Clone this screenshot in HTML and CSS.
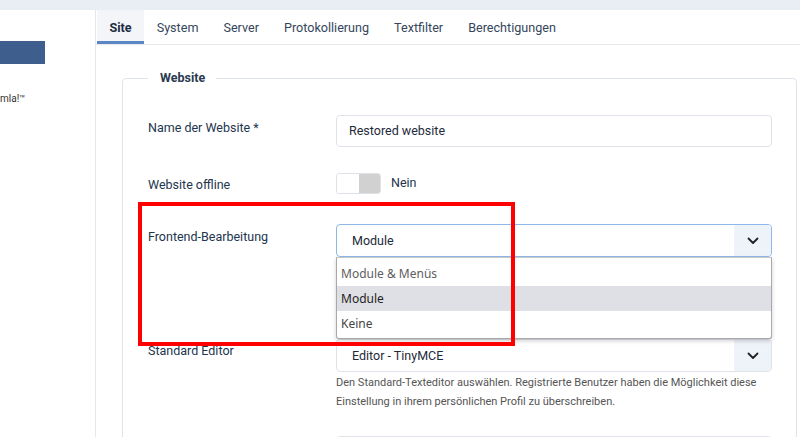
FILE: index.html
```html
<!DOCTYPE html>
<html lang="de">
<head>
<meta charset="utf-8">
<title>Globale Konfiguration</title>
<link rel="stylesheet" href="styles.css">
</head>
<body>
<div class="topstrip"></div>
<div class="layout">
  <aside class="sidebar">
    <div class="side-bar-blue"></div>
    <div class="side-text">mla!™</div>
  </aside>
  <main class="main">
    <nav class="tabs">
      <span class="tab active">Site</span>
      <span class="tab">System</span>
      <span class="tab">Server</span>
      <span class="tab">Protokollierung</span>
      <span class="tab">Textfilter</span>
      <span class="tab">Berechtigungen</span>
    </nav>
    <div class="content">
      <fieldset class="box">
        <legend>Website</legend>
        <div class="row row-name">
          <label class="lbl">Name der Website *</label>
          <div class="ctl"><div class="input">Restored website</div></div>
        </div>
        <div class="row row-offline">
          <label class="lbl">Website offline</label>
          <div class="ctl toggle-wrap">
            <span class="toggle"><span class="t-on"></span><span class="t-off"></span></span>
            <span class="toggle-text">Nein</span>
          </div>
        </div>
        <div class="row row-frontend">
          <label class="lbl">Frontend-Bearbeitung</label>
          <div class="ctl dd-anchor">
            <div class="select focus">
              <span class="sel-text">Module</span>
              <span class="sel-arrow"><svg width="12" height="8" viewBox="0 0 12 8"><path d="M1.5 1.5 L6 6 L10.5 1.5" fill="none" stroke="#222" stroke-width="1.8" stroke-linecap="round" stroke-linejoin="round"/></svg></span>
            </div>
            <ul class="dropdown">
              <li class="opt opt-first">Module &amp; Menüs</li>
              <li class="opt opt-sel">Module</li>
              <li class="opt">Keine</li>
            </ul>
          </div>
        </div>
        <div class="row row-editor">
          <label class="lbl">Standard Editor</label>
          <div class="ctl">
            <div class="select">
              <span class="sel-text">Editor - TinyMCE</span>
              <span class="sel-arrow"><svg width="12" height="8" viewBox="0 0 12 8"><path d="M1.5 1.5 L6 6 L10.5 1.5" fill="none" stroke="#222" stroke-width="1.8" stroke-linecap="round" stroke-linejoin="round"/></svg></span>
            </div>
            <p class="desc">Den Standard-Texteditor auswählen. Registrierte Benutzer haben die Möglichkeit diese Einstellung in ihrem persönlichen Profil zu überschreiben.</p>
          </div>
        </div>
        <div class="row row-next">
          <label class="lbl"></label>
          <div class="ctl"><div class="select"><span class="sel-text"></span><span class="sel-arrow"></span></div></div>
        </div>
      </fieldset>
      <div class="highlight"></div>
    </div>
  </main>
</div>
</body>
</html>
```

FILE: styles.css
```css
html, body {
  margin: 0;
  padding: 0;
  background: #fff;
  font-family: Roboto, "Liberation Sans", sans-serif;
  overflow: hidden;
  height: 437px;
}
.topstrip {
  height: 10px;
  background: #e9edf4;
}
.layout {
  display: flex;
  height: 427px;
}
.sidebar {
  width: 96px;
  flex: none;
  border-right: 1px solid #e4e8ee;
  padding-top: 31px;
  box-sizing: border-box;
}
.side-bar-blue {
  width: 45px;
  height: 23px;
  background: #3e5f8e;
}
.side-text {
  margin-top: 29px;
  font-size: 10px;
  color: #333;
  line-height: 12px;
}
.main {
  flex: 1;
  min-width: 0;
}
.tabs {
  display: flex;
  height: 35px;
  border-bottom: 1px solid #e6e9ee;
  box-sizing: border-box;
}
.tab {
  padding: 5px 12.5px 0;
  font-size: 12.6px;
  line-height: 26px;
  color: #34465c;
  border-bottom: 3px solid transparent;
}
.tab.active {
  background: #f3f5f9;
  border-bottom-color: #5a86c3;
  font-weight: 700;
  color: #1c2d44;
  margin-left: 1px;
}
.content {
  position: relative;
  padding: 25px 3px 0 26px;
}
.box {
  margin: 0;
  border: 1px solid #dfe4ea;
  border-radius: 4px;
  padding: 29px 24px 0 25px;
  min-width: 0;
}
.box legend {
  padding: 0 11px 0 12px;
  font-size: 12.5px;
  font-weight: 700;
  color: #2a3a4f;
  line-height: 16px;
}
.row {
  display: flex;
  align-items: flex-start;
}
.lbl {
  width: 188px;
  flex: none;
  font-size: 12.5px;
  color: #22354e;
  line-height: 16px;
}
.ctl {
  width: 436px;
  flex: none;
}
.input {
  height: 32px;
  box-sizing: border-box;
  border: 1px solid #dfe3e9;
  border-radius: 4px;
  padding: 0 12px;
  line-height: 30px;
  font-size: 12.5px;
  color: #1e2a3a;
}
.row-name .lbl { padding-top: 5px; }
.row-offline { margin-top: 26px; }
.row-offline .lbl { padding-top: 4px; }
.toggle-wrap {
  display: flex;
  align-items: center;
}
.toggle {
  display: flex;
  width: 45px;
  height: 21px;
  box-sizing: border-box;
  border: 1px solid #dde2e8;
  border-radius: 3px;
  overflow: hidden;
}
.t-on { flex: 1; background: #fff; }
.t-off { flex: 1; background: #d1d1d1; }
.toggle-text {
  margin-left: 10px;
  font-size: 12.5px;
  color: #22354e;
  line-height: 16px;
  margin-top: -1px;
}
.row-frontend { margin-top: 30px; }
.row-frontend .lbl { padding-top: 5px; }
.dd-anchor { position: relative; }
.select {
  display: flex;
  height: 33px;
  box-sizing: border-box;
  border: 1px solid #dfe3e9;
  border-radius: 4px;
  overflow: hidden;
}
.select.focus { border-color: #8fb8ea; }
.sel-text {
  flex: 1;
  padding-left: 15px;
  font-size: 12.5px;
  line-height: 31px;
  color: #1e2a3a;
}
.sel-arrow {
  width: 37px;
  background: #eef2f9;
  display: flex;
  align-items: center;
  justify-content: center;
}
.dropdown {
  position: absolute;
  left: 0;
  top: 33px;
  width: 436px;
  box-sizing: border-box;
  margin: 0;
  padding: 3px 0 2px;
  list-style: none;
  background: #fff;
  border: 1px solid #a9a9a9;
  border-top-color: #c8c8c8;
  border-radius: 0 0 3px 3px;
  box-shadow: 0 2px 4px rgba(0,0,0,0.18);
  z-index: 2;
}
.opt {
  height: 25px;
  line-height: 25px;
  padding-left: 4px;
  font-family: "Noto Sans", "Open Sans", sans-serif;
  font-size: 12px;
  color: #444;
}
.opt-first { color: #5e5e5e; }
.opt-sel { background: #dfe0e5; color: #1e1e1e; }
.row-editor { margin-top: 82px; }
.row-editor .lbl { padding-top: 4px; }
.desc {
  margin: 1px 0 0;
  font-size: 11px;
  line-height: 19px;
  color: #555;
}
.row-next { margin-top: 25px; }
.highlight {
  position: absolute;
  left: 42px;
  top: 157px;
  width: 377px;
  height: 144px;
  box-sizing: border-box;
  border: 4px solid #ff0000;
  z-index: 3;
}
```
